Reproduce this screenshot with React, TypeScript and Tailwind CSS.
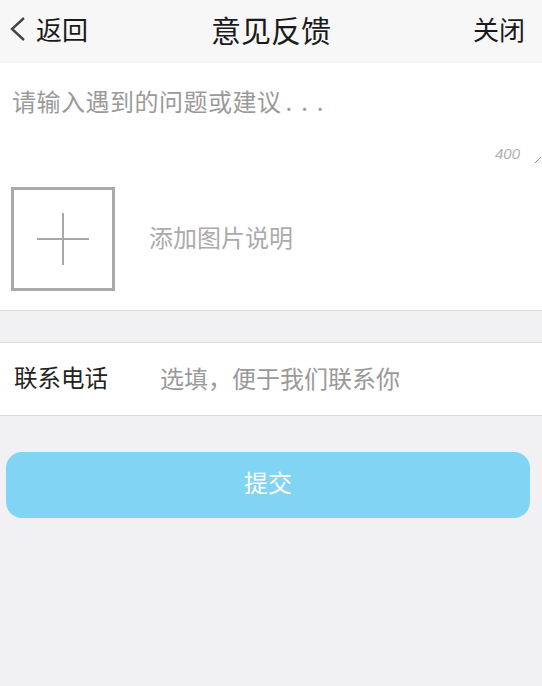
import React from 'react'

const font = { fontFamily: '"Noto Sans CJK SC", "Noto Sans", sans-serif' }

export default function App() {
  return (
    <div className="min-h-[686px] bg-[#f1f0f3]" style={font}>
      {/* Header */}
      <header className="relative flex h-[63px] items-center justify-between bg-[#f7f7f8] px-[9px] pb-[6px]">
        <div className="flex items-center text-[#1a1a1a]">
          <svg className="h-[26px] w-[18px]" viewBox="0 0 18 26" fill="none" stroke="#444" strokeWidth={2.4}>
            <path d="M15 2 L3 13 L15 24" />
          </svg>
          <span className="ml-[9px] text-[26px] leading-none">返回</span>
        </div>
        <h1 className="absolute left-1/2 top-[14px] -translate-x-1/2 text-[30px] leading-none text-[#1a1a1a]">意见反馈</h1>
        <span className="mr-[8px] text-[26px] leading-none text-[#1a1a1a]">关闭</span>
      </header>

      {/* Feedback */}
      <section className="border-b border-[#dcdcde] bg-white">
        <div className="relative h-[112px] px-[12px] pt-[26px]">
          <p className="text-[24px] leading-none tracking-[0.5px] text-[#9a9a9a]">
            请输入遇到的问题或建议<span className="ml-[4px] tracking-[9px]">...</span>
          </p>
          <span className="absolute right-[22px] top-[80px] text-[15px] italic text-[#b0b0b0]" style={{ fontFamily: '"Liberation Sans", sans-serif' }}>400</span>
          <svg className="absolute right-[1px] top-[94px] h-[6px] w-[6px]" viewBox="0 0 6 6" stroke="#999" strokeWidth={1}>
            <path d="M0 6 L6 0" />
          </svg>
        </div>
        <div className="flex items-center pb-[19px] pl-[11px] pt-[12px]">
          <div className="relative flex h-[104px] w-[104px] items-center justify-center border-[3px] border-[#aaaaaa]">
            <div className="absolute h-[52px] w-[2px] bg-[#a8a8a8]" />
            <div className="absolute h-[2px] w-[52px] bg-[#a8a8a8]" />
          </div>
          <span className="mb-[5px] ml-[34px] text-[24px] leading-none text-[#ababab]">添加图片说明</span>
        </div>
      </section>

      {/* Phone */}
      <div className="mt-[31px] flex h-[74px] items-center border-y border-[#dcdcde] bg-white px-[14px] pb-[3px]">
        <span className="w-[146px] text-[23.5px] leading-none text-[#222]">联系电话</span>
        <span className="text-[24px] leading-none text-[#9a9a9a]">选填，便于我们联系你</span>
      </div>

      {/* Submit */}
      <div className="px-[6px] pr-[12px] pt-[36px]">
        <button className="flex h-[66px] w-full items-center justify-center rounded-[16px] bg-[#81d4f3] pb-[6px] text-[24px] leading-none text-white">
          提交
        </button>
      </div>
    </div>
  )
}
